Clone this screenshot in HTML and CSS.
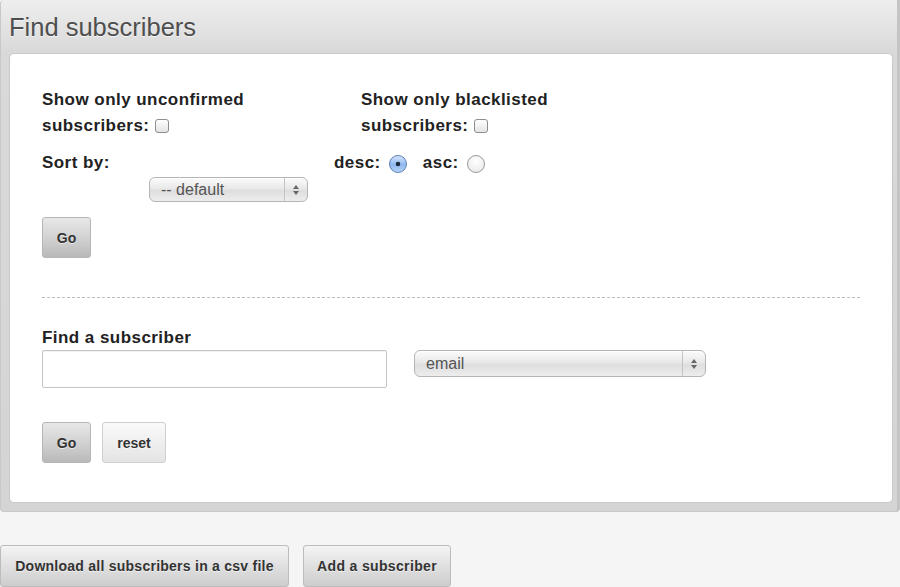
FILE: index.html
```html
<!DOCTYPE html>
<html>
<head>
<meta charset="utf-8">
<title>Find subscribers</title>
<link rel="stylesheet" href="styles.css">
</head>
<body>
<div class="panel">
  <h1 class="title">Find subscribers</h1>
  <div class="box">
    <div class="filters">
      <label class="filter">Show only unconfirmed subscribers: <input type="checkbox" class="check"></label>
      <label class="filter filter-right">Show only blacklisted subscribers: <input type="checkbox" class="check"></label>
    </div>
    <div class="sort-row">
      <span class="label sort-label">Sort by:</span>
      <span class="order">
        <label class="label">desc: <input type="radio" name="order" class="radio" checked></label>
        <label class="label">asc: <input type="radio" name="order" class="radio"></label>
      </span>
    </div>
    <div class="select select-default">
      <select><option>-- default</option></select>
      <span class="select-arrows"><svg width="8" height="12" viewBox="0 0 8 12"><path d="M4 1 L7 5 L1 5 Z M4 11 L7 7 L1 7 Z" fill="#666"/></svg></span>
    </div>
    <div class="btn-row first-go">
      <button class="btn btn-dark">Go</button>
    </div>
    <hr class="divider">
    <div class="label find-label">Find a subscriber</div>
    <div class="find-row">
      <input type="text" class="text-input">
      <div class="select select-email">
        <select><option>email</option></select>
        <span class="select-arrows"><svg width="8" height="12" viewBox="0 0 8 12"><path d="M4 1 L7 5 L1 5 Z M4 11 L7 7 L1 7 Z" fill="#666"/></svg></span>
      </div>
    </div>
    <div class="btn-row second-go">
      <button class="btn btn-dark">Go</button>
      <button class="btn btn-light">reset</button>
    </div>
  </div>
</div>
<div class="actions">
  <button class="btn btn-action btn-download">Download all subscribers in a csv file</button>
  <button class="btn btn-action btn-add">Add a subscriber</button>
</div>
</body>
</html>
```
FILE: styles.css
```css
html, body {
  margin: 0;
  padding: 0;
}
body {
  background: #f5f5f5;
  font-family: "Liberation Sans", Arial, sans-serif;
  color: #222;
  width: 900px;
  overflow: hidden;
}
.panel {
  background: linear-gradient(#eeeeee 0px, #d9d9d9 52px, #d4d4d4 100%);
  border-right: 3px solid #c4c4c4;
  border-left: 1px solid #c8c8c8;
  border-bottom: 1px solid #c8c8c8;
  border-radius: 4px 0 4px 4px;
  padding: 0 4px 8px 8px;
  width: 884px;
}
.title {
  margin: 0;
  height: 53px;
  box-sizing: border-box;
  padding-top: 12px;
  font-size: 25.5px;
  font-weight: normal;
  color: #4e4e4e;
  line-height: 30px;
  text-shadow: 0 1px 0 #f4f4f4;
}
.box {
  background: #fff;
  border: 1px solid #c9c9c9;
  border-radius: 5px;
  padding: 33px 32px 39px 32px;
  height: 450px;
  box-sizing: border-box;
}
.filters {
  display: flex;
}
.filter, .label {
  font-size: 17px;
  font-weight: bold;
  line-height: 26px;
  color: #222;
  letter-spacing: 0.45px;
}
.filter {
  display: block;
  width: 230px;
}
.filter-right {
  margin-left: 89px;
  width: 225px;
}
.check {
  appearance: none;
  -webkit-appearance: none;
  width: 14px;
  height: 14px;
  margin: 0 0 -2px 0;
  border: 1px solid #8e8e8e;
  border-radius: 3px;
  background: linear-gradient(#ffffff, #e4e4e4);
  box-sizing: border-box;
  vertical-align: baseline;
}
.sort-row {
  display: flex;
  margin-top: 11px;
}
.sort-label {
  width: 292px;
}
.order {
  display: flex;
  gap: 16px;
}
.radio {
  appearance: none;
  -webkit-appearance: none;
  width: 18px;
  height: 18px;
  margin: 0 0 -5px 3px;
  border: 1px solid #9a9a9a;
  border-radius: 50%;
  background: radial-gradient(circle at 50% 35%, #ffffff, #e6e6e6);
  box-sizing: border-box;
  vertical-align: baseline;
}
.radio:checked {
  border-color: #5a7fb8;
  background: radial-gradient(circle at 50% 50%, #1d2a3e 0px, #1d2a3e 2px, transparent 2.6px),
              linear-gradient(#d7e6fb, #8fb7ee 55%, #b7d3f7);
}
.select {
  position: relative;
  display: block;
  height: 25px;
  border: 1px solid #b5b5b5;
  border-radius: 6px;
  background: linear-gradient(#fbfbfb, #e9e9e9 45%, #dedede 55%, #ededed);
  box-sizing: border-box;
  box-shadow: inset 0 1px 0 #fff;
}
.select select {
  appearance: none;
  -webkit-appearance: none;
  border: 0;
  background: transparent;
  font-family: "Liberation Sans", Arial, sans-serif;
  font-size: 16px;
  color: #555;
  height: 23px;
  line-height: 23px;
  padding: 0 0 0 11px;
  width: 100%;
  outline: none;
}
.select-arrows {
  position: absolute;
  top: 0;
  right: 0;
  width: 22px;
  height: 23px;
  border-left: 1px solid #c4c4c4;
  display: flex;
  align-items: center;
  justify-content: center;
}
.select-default {
  width: 159px;
  margin: 1px 0 0 107px;
}
.btn-row {
  display: flex;
  gap: 11px;
}
.first-go {
  margin-top: 15px;
}
.btn {
  font-family: "Liberation Sans", Arial, sans-serif;
  font-weight: bold;
  color: #333;
  border: 1px solid #b6b6b6;
  border-radius: 3px;
  padding: 0;
  cursor: pointer;
  text-shadow: 0 1px 0 rgba(255,255,255,0.6);
}
.btn-dark {
  width: 49px;
  height: 41px;
  font-size: 14px;
  background: linear-gradient(#e8e8e8, #d2d2d2 50%, #b9b9b9);
}
.btn-light {
  width: 64px;
  height: 41px;
  font-size: 14px;
  border-color: #cfcfcf;
  background: linear-gradient(#fafafa, #efefef 50%, #e4e4e4);
}
.divider {
  border: 0;
  border-top: 1px dashed #bdbdbd;
  margin: 39px 0 0 0;
  height: 0;
  width: 818px;
}
.find-label {
  margin-top: 28px;
  line-height: 24px;
}
.find-row {
  display: flex;
  align-items: flex-start;
  gap: 27px;
}
.text-input {
  width: 345px;
  height: 38px;
  border: 1px solid #c5c5c5;
  border-radius: 2px;
  box-sizing: border-box;
  margin: 0;
  box-shadow: inset 0 1px 1px rgba(0,0,0,0.05);
}
.select-email {
  width: 292px;
  height: 27px;
}
.select-email select {
  height: 25px;
  line-height: 25px;
}
.select-email .select-arrows {
  height: 25px;
}
.second-go {
  margin-top: 34px;
}
.actions {
  display: flex;
  gap: 14px;
  margin-top: 33px;
}
.btn-action {
  height: 42px;
  font-size: 14px;
  color: #333;
  letter-spacing: 0.25px;
  border-color: #bcbcbc;
  background: linear-gradient(#f4f4f4, #e0e0e0 50%, #cdcdcd);
}
.btn-download {
  width: 289px;
}
.btn-add {
  width: 148px;
  letter-spacing: 0.35px;
}
```
